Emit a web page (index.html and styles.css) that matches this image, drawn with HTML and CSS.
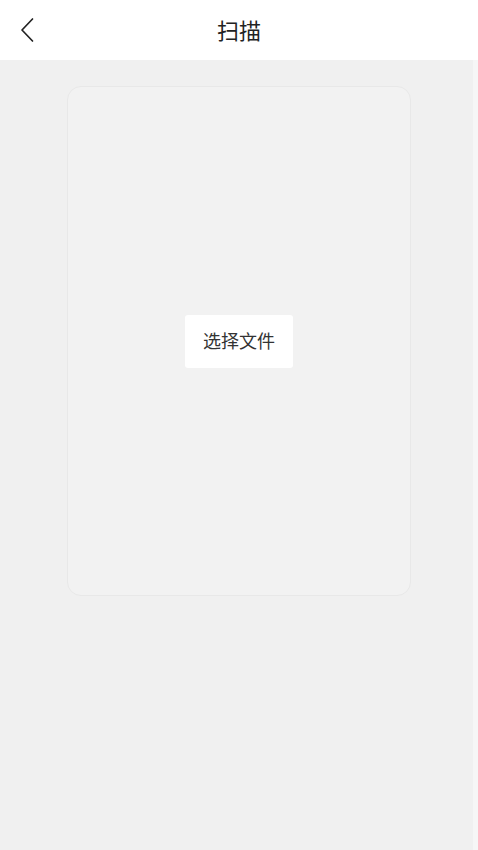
FILE: index.html
```html
<!DOCTYPE html>
<html lang="zh-CN">
<head>
<meta charset="UTF-8" />
<meta name="viewport" content="width=device-width, initial-scale=1" />
<title>扫描</title>
<link rel="stylesheet" href="styles.css">
</head>
<body>
<div class="page">
  <header class="nav-bar">
    <button class="nav-back" aria-label="返回">
      <svg width="16" height="26" viewBox="0 0 16 26"><path d="M13.5 2 L3 13 L13.5 24" fill="none" stroke="#222" stroke-width="1.7" stroke-linecap="round" stroke-linejoin="round"/></svg>
    </button>
    <h1 class="nav-title">扫描</h1>
  </header>
  <main class="content">
    <div class="drop-zone">
      <button class="pick-btn">选择文件</button>
    </div>
  </main>
  <div class="scroll-strip"></div>
</div>
</body>
</html>
```
FILE: styles.css
```css
body, html {
  margin: 0; padding: 0; height: 100%;
  font-family: "Noto Sans CJK SC", "Noto Sans", sans-serif;
  background: #f0f0f0; color: #333;
}
.page {
  min-height: 100vh; display: flex; flex-direction: column;
}
.nav-bar {
  height: 60px; background: #fff; display: flex; align-items: center;
  justify-content: center; position: relative;
}
.nav-back {
  position: absolute; left: 19px; top: 17px;
  background: none; border: none; padding: 0; cursor: pointer; display: flex;
}
.nav-title {
  margin: 0 0 3px; font-size: 22px; line-height: 1; font-weight: 400; color: #222;
}
.content {
  flex-grow: 1; padding-top: 26px; display: flex; justify-content: center;
  align-items: flex-start;
}
.drop-zone {
  width: 342px; height: 508px; border: 1px solid #e8e8e8; border-radius: 14px;
  background: #f2f2f2; display: flex; align-items: center; justify-content: center;
}
.pick-btn {
  width: 108px; height: 53px; background: #fff; border: none; border-radius: 3px;
  font-family: inherit; font-size: 18px; line-height: 1; color: #333; cursor: pointer;
  padding: 0 0 3px;
}
.scroll-strip {
  position: fixed; right: 0; top: 60px; bottom: 0; width: 5px; background: #f6f6f6;
}
```
